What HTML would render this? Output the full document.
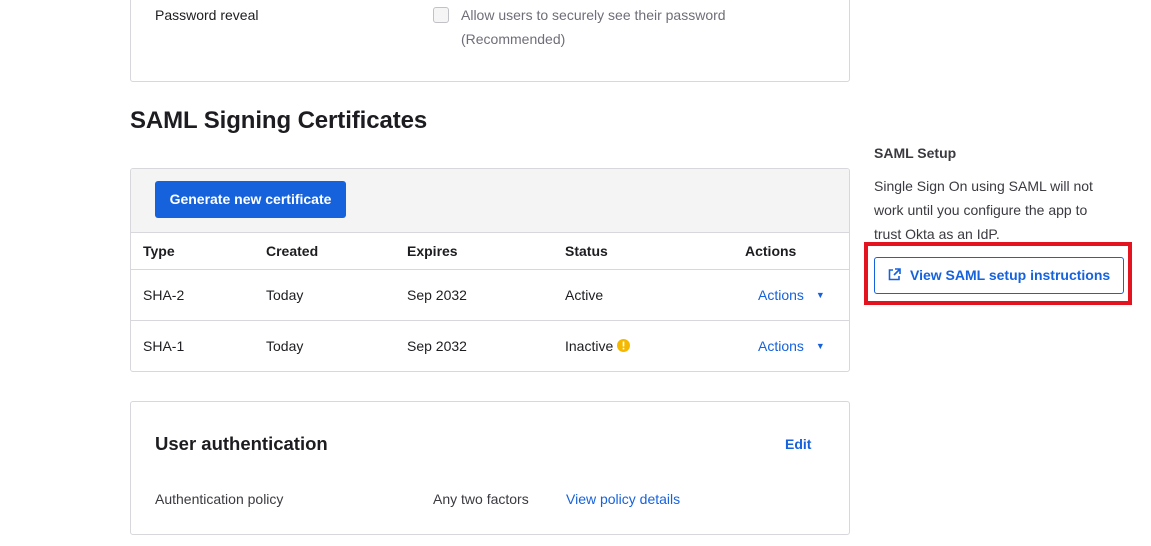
<!DOCTYPE html>
<html><head><style>
body{margin:0;width:1151px;height:546px;background:#fff;position:relative;overflow:hidden;font-family:"Liberation Sans",sans-serif;color:#1d1d21;font-size:14px}
.a{position:absolute}
.card{position:absolute;left:130px;width:718px;border:1px solid #d7d7dc;border-radius:3px}
.blue{color:#1662dd}
.line{position:absolute;left:0;right:0;height:1px;background:#d7d7dc}
</style></head><body>
<div class="card" style="top:-10px;height:90px;border-radius:0 0 3px 3px"></div>
<div class="a" style="left:155px;top:7px">Password reveal</div>
<div class="a" style="left:433px;top:7px;width:14px;height:14px;border:1px solid #c1c1c8;border-radius:3px;background:#f5f5f6"></div>
<div class="a" style="left:461px;top:3px;color:#6e6e78;line-height:24px">Allow users to securely see their password<br>(Recommended)</div>
<div class="a" style="left:130px;top:107px;font-size:24px;font-weight:600;letter-spacing:-0.1px">SAML Signing Certificates</div>
<div class="card" style="top:168px;height:202px;overflow:hidden">
 <div class="a" style="left:0;top:0;right:0;height:63px;background:#f4f4f4"></div>
 <div class="a" style="left:24px;top:12px;width:191px;height:37px;background:#1662dd;border-radius:3px;color:#fff;font-weight:bold;font-size:14px;line-height:37px;text-align:center">Generate new certificate</div>
 <div class="line" style="top:63px"></div><div class="line" style="top:100px"></div><div class="line" style="top:151px"></div>
 <div class="a" style="top:74px;left:12px;font-weight:bold">Type</div>
 <div class="a" style="top:74px;left:135px;font-weight:bold">Created</div>
 <div class="a" style="top:74px;left:276px;font-weight:bold">Expires</div>
 <div class="a" style="top:74px;left:434px;font-weight:bold">Status</div>
 <div class="a" style="top:74px;left:614px;font-weight:bold">Actions</div>
 <div class="a" style="top:118px;left:12px">SHA-2</div><div class="a" style="top:118px;left:135px">Today</div><div class="a" style="top:118px;left:276px">Sep 2032</div><div class="a" style="top:118px;left:434px">Active</div>
 <div class="a blue" style="top:118px;left:627px">Actions <span style="font-size:9px;margin-left:8px;vertical-align:2px">▼</span></div>
 <div class="a" style="top:169px;left:12px">SHA-1</div><div class="a" style="top:169px;left:135px">Today</div><div class="a" style="top:169px;left:276px">Sep 2032</div><div class="a" style="top:169px;left:434px">Inactive <svg width="13" height="13" viewBox="0 0 13 13" style="vertical-align:-1px"><circle cx="6.5" cy="6.5" r="6.5" fill="#f5b800"/><rect x="5.7" y="2.5" width="1.6" height="5" fill="#fff"/><rect x="5.7" y="8.8" width="1.6" height="1.6" fill="#fff"/></svg></div>
 <div class="a blue" style="top:169px;left:627px">Actions <span style="font-size:9px;margin-left:8px;vertical-align:2px">▼</span></div>
</div>
<div class="card" style="top:401px;height:132px">
 <div class="a" style="left:24px;top:31px;font-size:18.5px;font-weight:600">User authentication</div>
 <div class="a blue" style="left:654px;top:34px;font-weight:bold">Edit</div>
 <div class="a" style="left:24px;top:89px;color:#3a3a40">Authentication policy</div>
 <div class="a" style="left:302px;top:89px;color:#3a3a40">Any two factors</div>
 <div class="a blue" style="left:435px;top:89px">View policy details</div>
</div>
<div class="a" style="left:874px;top:145px;font-weight:bold;color:#3a3a40">SAML Setup</div>
<div class="a" style="left:874px;top:174px;width:240px;line-height:24px;color:#3a3a40">Single Sign On using SAML will not work until you configure the app to trust Okta as an IdP.</div>
<div class="a" style="left:864px;top:242px;width:260px;height:55px;border:4px solid #e3141f"></div>
<div class="a" style="left:874px;top:257px;width:248px;height:35px;border:1px solid #1662dd;border-radius:3px"></div>
<svg class="a" style="left:888px;top:268px" width="13" height="13" viewBox="0 0 13 13" fill="none" stroke="#1662dd" stroke-width="1.6"><path d="M5 2H1.5v9.5H11V8"/><path d="M7 1h5v5M12 1L6 7"/></svg>
<div class="a blue" style="left:910px;top:267px;font-weight:bold">View SAML setup instructions</div>
</body></html>
